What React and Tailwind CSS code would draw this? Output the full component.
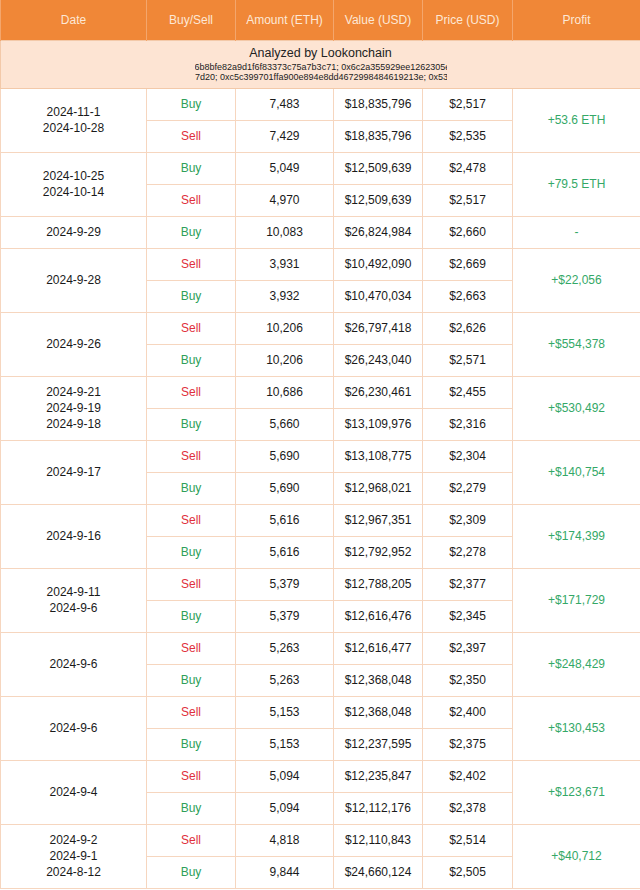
const groups = [
  { dates: ['2024-11-1', '2024-10-28'], profit: '+53.6 ETH', rows: [['Buy', '7,483', '$18,835,796', '$2,517'], ['Sell', '7,429', '$18,835,796', '$2,535']] },
  { dates: ['2024-10-25', '2024-10-14'], profit: '+79.5 ETH', rows: [['Buy', '5,049', '$12,509,639', '$2,478'], ['Sell', '4,970', '$12,509,639', '$2,517']] },
  { dates: ['2024-9-29'], profit: '-', rows: [['Buy', '10,083', '$26,824,984', '$2,660']] },
  { dates: ['2024-9-28'], profit: '+$22,056', rows: [['Sell', '3,931', '$10,492,090', '$2,669'], ['Buy', '3,932', '$10,470,034', '$2,663']] },
  { dates: ['2024-9-26'], profit: '+$554,378', rows: [['Sell', '10,206', '$26,797,418', '$2,626'], ['Buy', '10,206', '$26,243,040', '$2,571']] },
  { dates: ['2024-9-21', '2024-9-19', '2024-9-18'], profit: '+$530,492', rows: [['Sell', '10,686', '$26,230,461', '$2,455'], ['Buy', '5,660', '$13,109,976', '$2,316']] },
  { dates: ['2024-9-17'], profit: '+$140,754', rows: [['Sell', '5,690', '$13,108,775', '$2,304'], ['Buy', '5,690', '$12,968,021', '$2,279']] },
  { dates: ['2024-9-16'], profit: '+$174,399', rows: [['Sell', '5,616', '$12,967,351', '$2,309'], ['Buy', '5,616', '$12,792,952', '$2,278']] },
  { dates: ['2024-9-11', '2024-9-6'], profit: '+$171,729', rows: [['Sell', '5,379', '$12,788,205', '$2,377'], ['Buy', '5,379', '$12,616,476', '$2,345']] },
  { dates: ['2024-9-6'], profit: '+$248,429', rows: [['Sell', '5,263', '$12,616,477', '$2,397'], ['Buy', '5,263', '$12,368,048', '$2,350']] },
  { dates: ['2024-9-6'], profit: '+$130,453', rows: [['Sell', '5,153', '$12,368,048', '$2,400'], ['Buy', '5,153', '$12,237,595', '$2,375']] },
  { dates: ['2024-9-4'], profit: '+$123,671', rows: [['Sell', '5,094', '$12,235,847', '$2,402'], ['Buy', '5,094', '$12,112,176', '$2,378']] },
  { dates: ['2024-9-2', '2024-9-1', '2024-8-12'], profit: '+$40,712', rows: [['Sell', '4,818', '$12,110,843', '$2,514'], ['Buy', '9,844', '$24,660,124', '$2,505']] },
];

const headers = ['Date', 'Buy/Sell', 'Amount (ETH)', 'Value (USD)', 'Price (USD)', 'Profit'];

const cell = 'border border-[#f6d6bf] text-center align-middle p-0';

export default function App() {
  return (
    <div className="w-[640px] h-[890px] bg-white overflow-hidden" style={{ fontFamily: '"Liberation Sans", Arial, sans-serif' }}>
      <table className="w-[640px] table-fixed border-collapse text-[12px] text-[#1a1a1a]">
        <colgroup>
          <col className="w-[146px]" />
          <col className="w-[89px]" />
          <col className="w-[98px]" />
          <col className="w-[89px]" />
          <col className="w-[90px]" />
          <col className="w-[128px]" />
        </colgroup>
        <thead>
          <tr className="h-[40px] bg-[#f08737]">
            {headers.map((h) => (
              <th key={h} className="border-x border-[#f4a66c] font-normal text-[12px] text-[#fde8d6] text-center align-middle p-0">
                {h}
              </th>
            ))}
          </tr>
        </thead>
        <tbody>
          <tr className="h-[48px] bg-[#fde4d3]">
            <td colSpan={6} className="border border-[#f3c9a9] p-0 align-top">
              <div className="flex flex-col items-center pt-[5px]">
                <div className="text-[12.5px] leading-[14px] text-[#222]">Analyzed by Lookonchain</div>
                <div className="w-[252px] overflow-hidden whitespace-nowrap text-[9px] leading-[10px] mt-[2px] text-[#222]">
                  6b8bfe82a9d1f6f83373c75a7b3c71; 0x6c2a355929ee1262305e
                </div>
                <div className="w-[252px] overflow-hidden whitespace-nowrap text-[9px] leading-[10px] text-[#222]">
                  <span className="ml-[-2px]">;7d20; 0xc5c399701ffa900e894e8dd4672998484619213e; 0x53</span>
                </div>
              </div>
            </td>
          </tr>
          {groups.map((g, gi) =>
            g.rows.map((r, ri) => (
              <tr key={gi + '-' + ri} className="h-[32px]">
                {ri === 0 && (
                  <td rowSpan={g.rows.length} className={cell}>
                    <div className="flex flex-col items-center leading-[16px]">
                      {g.dates.map((d, di) => (
                        <span key={di}>{d}</span>
                      ))}
                    </div>
                  </td>
                )}
                <td className={cell}>
                  <span className={r[0] === 'Buy' ? 'text-[#2e9f59]' : 'text-[#e0303c]'}>{r[0]}</span>
                </td>
                <td className={cell}>{r[1]}</td>
                <td className={cell}>{r[2]}</td>
                <td className={cell}>{r[3]}</td>
                {ri === 0 && (
                  <td rowSpan={g.rows.length} className={cell + ' text-[#34a867]'}>
                    {g.profit}
                  </td>
                )}
              </tr>
            ))
          )}
        </tbody>
      </table>
    </div>
  );
}
